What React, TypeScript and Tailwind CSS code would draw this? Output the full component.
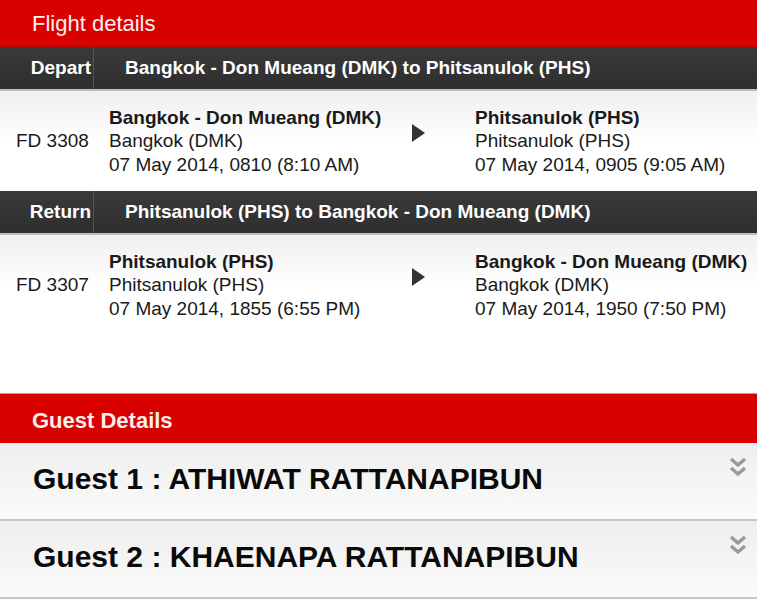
const FONT = { fontFamily: '"Liberation Sans", Arial, Helvetica, sans-serif' };

type Leg = {
  flight: string;
  from: { name: string; city: string; time: string };
  to: { name: string; city: string; time: string };
};

const LEGS: { label: string; route: string; leg: Leg }[] = [
  {
    label: "Depart",
    route: "Bangkok - Don Mueang (DMK) to Phitsanulok (PHS)",
    leg: {
      flight: "FD 3308",
      from: { name: "Bangkok - Don Mueang (DMK)", city: "Bangkok (DMK)", time: "07 May 2014, 0810 (8:10 AM)" },
      to: { name: "Phitsanulok (PHS)", city: "Phitsanulok (PHS)", time: "07 May 2014, 0905 (9:05 AM)" },
    },
  },
  {
    label: "Return",
    route: "Phitsanulok (PHS) to Bangkok - Don Mueang (DMK)",
    leg: {
      flight: "FD 3307",
      from: { name: "Phitsanulok (PHS)", city: "Phitsanulok (PHS)", time: "07 May 2014, 1855 (6:55 PM)" },
      to: { name: "Bangkok - Don Mueang (DMK)", city: "Bangkok (DMK)", time: "07 May 2014, 1950 (7:50 PM)" },
    },
  },
];

const GUESTS = ["ATHIWAT RATTANAPIBUN", "KHAENAPA RATTANAPIBUN"];

export default function App() {
  return (
    <div className="w-[757px] h-[600px] overflow-hidden bg-white text-black" style={FONT}>
      {/* Flight details */}
      <div className="h-[47px] bg-[#d90000] border-b border-[#b80000] flex items-center pl-8">
        <span className="text-[22px] text-[#fbeeee]">Flight details</span>
      </div>

      {LEGS.map(({ label, route, leg }) => (
        <div key={label}>
          <div className="h-[44px] bg-gradient-to-b from-[#3a3a3a] to-[#2e2e2e] border-b-2 border-[#bdbdbd] flex items-stretch text-white font-bold text-[19px]">
            <div className="w-[94px] shrink-0 border-r border-[#555] flex items-center justify-end pr-[2px]">{label}</div>
            <div className="flex items-center pl-[31px]">{route}</div>
          </div>
          <FlightRow leg={leg} />
        </div>
      ))}

      <div className="h-[58px] bg-white" />

      {/* Guest details */}
      <div className="h-[50px] bg-[#d90000] border-t border-[#e88] flex items-center pl-8 pt-[4px]">
        <span className="text-[22px] font-bold text-[#fbeeee]">Guest Details</span>
      </div>

      {GUESTS.map((name, i) => (
        <div
          key={name}
          className="relative h-[78px] bg-gradient-to-b from-[#eeeeee] to-[#fbfbfb] border-b-2 border-[#c6c6c6] flex items-center pl-[33px] pb-[6px]"
        >
          <span className="text-[30px] font-bold text-[#0a0a0a]">
            Guest {i + 1} : {name}
          </span>
          <DoubleChevron />
        </div>
      ))}
    </div>
  );
}

function FlightRow({ leg }: { leg: Leg }) {
  return (
    <div className="h-[100px] bg-gradient-to-b from-[#efefef] via-white to-white flex items-center text-[19px] leading-[23.5px] text-[#1a1a1a]">
      <div className="w-[109px] shrink-0 pl-4">{leg.flight}</div>
      <Place {...leg.from} />
      <div className="w-[63px] shrink-0 flex items-center -mt-[16px]">
        <svg width="13" height="18" viewBox="0 0 13 18">
          <path d="M0 0 L13 9 L0 18 Z" fill="#333" />
        </svg>
      </div>
      <Place {...leg.to} />
    </div>
  );
}

function Place({ name, city, time }: { name: string; city: string; time: string }) {
  return (
    <div className="w-[303px] shrink-0 last:w-auto">
      <div className="font-bold whitespace-nowrap">{name}</div>
      <div className="whitespace-nowrap">{city}</div>
      <div className="whitespace-nowrap">{time}</div>
    </div>
  );
}

function DoubleChevron() {
  return (
    <svg className="absolute right-[10px] top-[14px]" width="18" height="21" viewBox="0 0 18 21">
      <path d="M2 2 L9 8 L16 2" fill="none" stroke="#9a9a9a" strokeWidth="3.5" />
      <path d="M2 11 L9 17 L16 11" fill="none" stroke="#9a9a9a" strokeWidth="3.5" />
    </svg>
  );
}
